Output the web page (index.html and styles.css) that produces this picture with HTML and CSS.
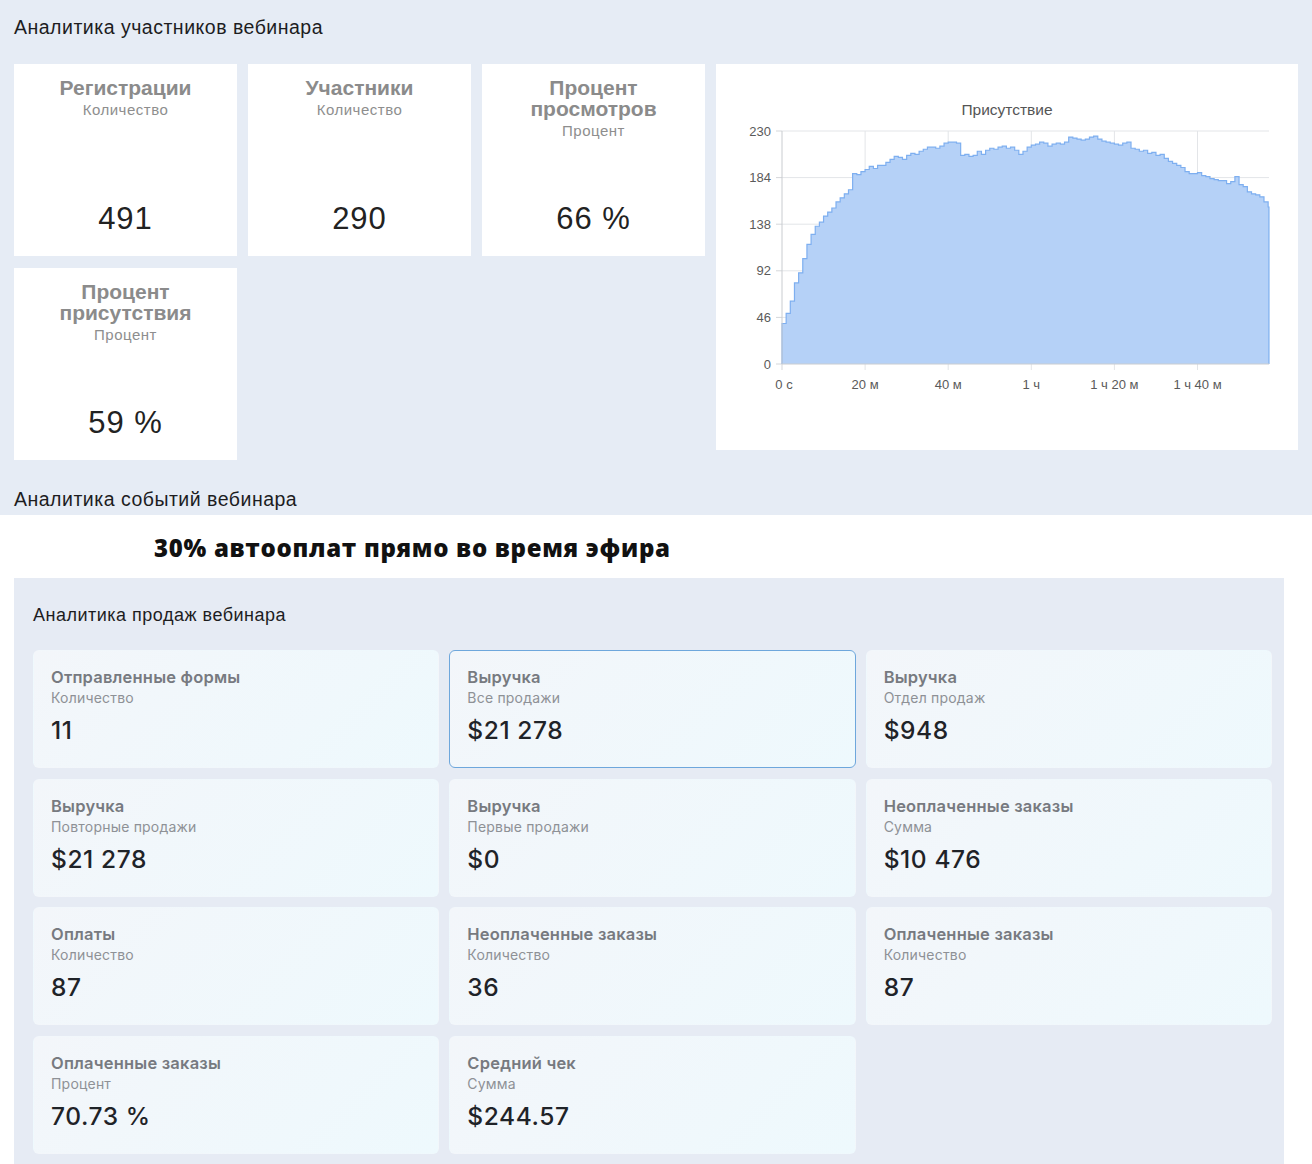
FILE: index.html
```html
<!DOCTYPE html>
<html lang="ru">
<head>
<meta charset="utf-8">
<title>Аналитика вебинара</title>
<link rel="stylesheet" href="styles.css">
</head>
<body>
<section class="participants">
  <h2 class="section-title">Аналитика участников вебинара</h2>
  <div class="stats-grid">
    <div class="stat-card">
      <div class="stat-title">Регистрации</div>
      <div class="stat-sub">Количество</div>
      <div class="stat-value">491</div>
    </div>
    <div class="stat-card">
      <div class="stat-title">Участники</div>
      <div class="stat-sub">Количество</div>
      <div class="stat-value">290</div>
    </div>
    <div class="stat-card">
      <div class="stat-title">Процент просмотров</div>
      <div class="stat-sub">Процент</div>
      <div class="stat-value">66 %</div>
    </div>
    <div class="chart-card">
      <svg class="chart" width="582" height="386" viewBox="0 0 582 386">
        <text class="chart-title" x="291" y="51" text-anchor="middle">Присутствие</text>
        <g class="grid">
          <line x1="66" y1="67" x2="553" y2="67"/>
          <line x1="66" y1="113.6" x2="553" y2="113.6"/>
          <line x1="66" y1="160.2" x2="553" y2="160.2"/>
          <line x1="66" y1="206.8" x2="553" y2="206.8"/>
          <line x1="66" y1="253.4" x2="553" y2="253.4"/>
          <line x1="149.1" y1="67" x2="149.1" y2="306"/>
          <line x1="232.2" y1="67" x2="232.2" y2="306"/>
          <line x1="315.3" y1="67" x2="315.3" y2="306"/>
          <line x1="398.4" y1="67" x2="398.4" y2="306"/>
          <line x1="481.5" y1="67" x2="481.5" y2="306"/>
        </g>
        <g class="ticks">
          <line x1="60" y1="67" x2="66" y2="67"/>
          <line x1="60" y1="113.6" x2="66" y2="113.6"/>
          <line x1="60" y1="160.2" x2="66" y2="160.2"/>
          <line x1="60" y1="206.8" x2="66" y2="206.8"/>
          <line x1="60" y1="253.4" x2="66" y2="253.4"/>
          <line x1="60" y1="300" x2="66" y2="300"/>
          <line x1="66" y1="300" x2="66" y2="306"/>
        </g>
        <g transform="translate(66 300) scale(4.155 -1.013)">
          <path class="area" d="M0 0V40H1V50H2V62H3V80H4V90H5V104H6V118H7V128H8V136H9V140H10V146H11V150H12V154H13V160H14V164H15V168H16V172H17V188H18V187H19V190H20V192H21V195H22V193H23V196H24V196H25V199H26V202H27V205H28V204H29V202H30V206H31V208H32V207H33V210H34V212H35V214H36V214H37V213H38V215H39V218H40V219H41V219H42V218H43V206H44V207H45V205H46V206H47V210H48V207H49V211H50V213H51V212H52V214H53V215H54V213H55V214H56V211H57V207H58V210H59V214H60V216H61V217H62V219H63V218H64V215H65V217H66V218H67V217H68V219H69V224H70V223H71V222H72V221H73V222H74V224H75V225H76V222H77V220H78V219H79V218H80V217H81V216H82V218H83V219H84V213H85V212H86V210H87V211H88V208H89V209H90V206H91V207H92V203H93V200H94V198H95V196H96V194H97V190H98V188H99V188H100V189H101V186H102V185H103V183H104V182H105V181H106V181H107V178H108V180H109V185H110V177H111V175H112V170H113V168H114V167H115V165H116V160H117V155H117.2V0Z"/>
          <path class="line" vector-effect="non-scaling-stroke" d="M0 0V40H1V50H2V62H3V80H4V90H5V104H6V118H7V128H8V136H9V140H10V146H11V150H12V154H13V160H14V164H15V168H16V172H17V188H18V187H19V190H20V192H21V195H22V193H23V196H24V196H25V199H26V202H27V205H28V204H29V202H30V206H31V208H32V207H33V210H34V212H35V214H36V214H37V213H38V215H39V218H40V219H41V219H42V218H43V206H44V207H45V205H46V206H47V210H48V207H49V211H50V213H51V212H52V214H53V215H54V213H55V214H56V211H57V207H58V210H59V214H60V216H61V217H62V219H63V218H64V215H65V217H66V218H67V217H68V219H69V224H70V223H71V222H72V221H73V222H74V224H75V225H76V222H77V220H78V219H79V218H80V217H81V216H82V218H83V219H84V213H85V212H86V210H87V211H88V208H89V209H90V206H91V207H92V203H93V200H94V198H95V196H96V194H97V190H98V188H99V188H100V189H101V186H102V185H103V183H104V182H105V181H106V181H107V178H108V180H109V185H110V177H111V175H112V170H113V168H114V167H115V165H116V160H117V155H117.2V0"/>
        </g>
        <g class="axis">
          <line x1="66" y1="67" x2="66" y2="300"/>
          <line x1="66" y1="300" x2="553" y2="300"/>
        </g>
        <g class="ylabels" text-anchor="end">
          <text x="55" y="71.5">230</text>
          <text x="55" y="118.1">184</text>
          <text x="55" y="164.7">138</text>
          <text x="55" y="211.3">92</text>
          <text x="55" y="257.9">46</text>
          <text x="55" y="304.5">0</text>
        </g>
        <g class="xlabels" text-anchor="middle">
          <text x="68" y="324.5">0 с</text>
          <text x="149.1" y="324.5">20 м</text>
          <text x="232.2" y="324.5">40 м</text>
          <text x="315.3" y="324.5">1 ч</text>
          <text x="398.4" y="324.5">1 ч 20 м</text>
          <text x="481.5" y="324.5">1 ч 40 м</text>
        </g>
      </svg>
    </div>
    <div class="stat-card">
      <div class="stat-title">Процент присутствия</div>
      <div class="stat-sub">Процент</div>
      <div class="stat-value">59 %</div>
    </div>
  </div>
  <h2 class="section-title events">Аналитика событий вебинара</h2>
</section>

<div class="promo">30% автооплат прямо во время эфира</div>

<section class="sales">
  <h2 class="sales-title">Аналитика продаж вебинара</h2>
  <div class="sales-grid">
    <div class="sale-card">
      <div class="sale-title">Отправленные формы</div>
      <div class="sale-sub">Количество</div>
      <div class="sale-value">11</div>
    </div>
    <div class="sale-card active">
      <div class="sale-title">Выручка</div>
      <div class="sale-sub">Все продажи</div>
      <div class="sale-value">$21 278</div>
    </div>
    <div class="sale-card">
      <div class="sale-title">Выручка</div>
      <div class="sale-sub">Отдел продаж</div>
      <div class="sale-value">$948</div>
    </div>
    <div class="sale-card">
      <div class="sale-title">Выручка</div>
      <div class="sale-sub">Повторные продажи</div>
      <div class="sale-value">$21 278</div>
    </div>
    <div class="sale-card">
      <div class="sale-title">Выручка</div>
      <div class="sale-sub">Первые продажи</div>
      <div class="sale-value">$0</div>
    </div>
    <div class="sale-card">
      <div class="sale-title">Неоплаченные заказы</div>
      <div class="sale-sub">Сумма</div>
      <div class="sale-value">$10 476</div>
    </div>
    <div class="sale-card">
      <div class="sale-title">Оплаты</div>
      <div class="sale-sub">Количество</div>
      <div class="sale-value">87</div>
    </div>
    <div class="sale-card">
      <div class="sale-title">Неоплаченные заказы</div>
      <div class="sale-sub">Количество</div>
      <div class="sale-value">36</div>
    </div>
    <div class="sale-card">
      <div class="sale-title">Оплаченные заказы</div>
      <div class="sale-sub">Количество</div>
      <div class="sale-value">87</div>
    </div>
    <div class="sale-card">
      <div class="sale-title">Оплаченные заказы</div>
      <div class="sale-sub">Процент</div>
      <div class="sale-value">70.73 %</div>
    </div>
    <div class="sale-card">
      <div class="sale-title">Средний чек</div>
      <div class="sale-sub">Сумма</div>
      <div class="sale-value">$244.57</div>
    </div>
  </div>
</section>
</body>
</html>
```

FILE: styles.css
```css
* { box-sizing: border-box; }

html, body {
  margin: 0;
  padding: 0;
  background: #ffffff;
}

body {
  font-family: "Liberation Sans", Arial, sans-serif;
  color: #222;
  width: 1312px;
}

.participants {
  background: #e6ecf5;
  padding: 16px 14px 5px;
}

.section-title {
  margin: 0;
  font-family: "Liberation Sans", Arial, sans-serif;
  font-weight: 400;
  font-size: 19.5px;
  letter-spacing: 0.5px;
  line-height: 22px;
  color: #1d1d1f;
}

.section-title.events {
  margin-top: 28px;
}

.stats-grid {
  margin-top: 26px;
  display: grid;
  grid-template-columns: 223px 223px 223px 582px;
  grid-template-rows: 192px 192px;
  column-gap: 11px;
  row-gap: 12px;
}

.stat-card {
  background: #ffffff;
  display: flex;
  flex-direction: column;
  align-items: center;
  text-align: center;
  padding: 13px 18px 19px;
}

.stat-title {
  font-weight: 700;
  font-size: 21px;
  line-height: 21px;
  color: #8b8b8b;
}

.stat-sub {
  margin-top: 3px;
  font-size: 15px;
  letter-spacing: 0.5px;
  line-height: 18px;
  color: #8e8e8e;
}

.stat-value {
  margin-top: auto;
  font-size: 31px;
  letter-spacing: 1px;
  line-height: 36px;
  color: #222;
}

.chart-card {
  grid-column: 4;
  grid-row: 1 / span 2;
  align-self: start;
  height: 386px;
  background: #ffffff;
}

.chart {
  display: block;
  font-family: "Liberation Sans", Arial, sans-serif;
}

.chart-title {
  font-size: 15.5px;
  fill: #555;
}

.grid line {
  stroke: #e3e5e8;
  stroke-width: 1;
}

.ticks line {
  stroke: #d5d7da;
  stroke-width: 1;
}

.axis line {
  stroke: #c9ccd0;
  stroke-width: 1;
}

.area {
  fill: #b5d1f7;
}

.line {
  fill: none;
  stroke: #7eaff0;
  stroke-width: 1.2;
}

.ylabels text,
.xlabels text {
  font-size: 13px;
  fill: #5a5a5a;
}

.promo {
  height: 63px;
  padding: 18px 0 0 154px;
  font-family: "Open Sans", sans-serif;
  font-weight: 800;
  font-size: 24px;
  letter-spacing: 0.7px;
  line-height: 30px;
  color: #111;
}

.sales {
  margin: 0 28px 0 14px;
  background: #e6ebf4;
  padding: 26px 12px 11px 19px;
}

.sales-title {
  margin: 0;
  font-family: "Liberation Sans", Arial, sans-serif;
  font-weight: 400;
  font-size: 18px;
  letter-spacing: 0.5px;
  line-height: 22px;
  color: #1d1d1f;
}

.sales-grid {
  margin-top: 24px;
  display: grid;
  grid-template-columns: repeat(3, 1fr);
  grid-auto-rows: 118px;
  column-gap: 10px;
  row-gap: 10.5px;
}

.sale-card {
  border-radius: 6px;
  background: linear-gradient(135deg, #f3f6fa 0%, #eef9fd 100%);
  border: 1px solid transparent;
  padding: 16px 17px 0;
  font-family: Inter, "Noto Sans", sans-serif;
}

.sale-card.active {
  border-color: #6ea7dc;
}

.sale-title {
  font-size: 16.5px;
  letter-spacing: 0.2px;
  line-height: 20px;
  font-weight: 600;
  color: #777a80;
}

.sale-sub {
  margin-top: 2px;
  font-size: 14px;
  letter-spacing: 0.2px;
  line-height: 18px;
  color: #8e9196;
}

.sale-value {
  margin-top: 8px;
  font-size: 24.5px;
  letter-spacing: 0.6px;
  line-height: 30px;
  font-weight: 500;
  color: #1f2328;
}
```
